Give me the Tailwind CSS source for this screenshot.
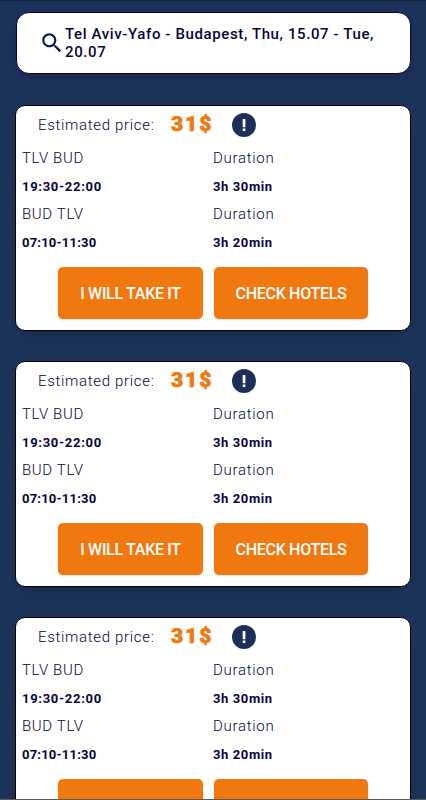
<!DOCTYPE html>
<html lang="en">
<head>
    <meta charset="UTF-8">
    <meta name="viewport" content="width=device-width, initial-scale=1.0">
    <title>Flights</title>
    <script src="https://cdn.jsdelivr.net/npm/@tailwindcss/browser@4"></script>
</head>
<body class="h-screen overflow-hidden border-b border-[#5b5b5b] bg-[#1c345a] font-[Roboto,sans-serif] text-[#04063d]">
    <!-- Search bar -->
    <header class="h-[87px] border-t border-[#14263f] bg-[#1d325a] pt-[11px] pl-4">
        <button class="flex h-[62px] w-[395px] items-center rounded-[13px] border border-[#04063d] bg-white pl-[22px] text-left shadow-md">
            <svg class="mt-[-1px] h-[26px] w-[26px] shrink-0 text-[#0f1b50]" viewBox="0 0 24 24" fill="currentColor">
                <path d="M15.5 14h-.79l-.28-.27C15.41 12.59 16 11.11 16 9.5 16 5.91 13.09 3 9.5 3S3 5.91 3 9.5 5.91 16 9.5 16c1.61 0 3.09-.59 4.23-1.57l.27.28v.79l5 4.99L20.49 19l-4.99-5zm-6 0C7.01 14 5 11.99 5 9.5S7.01 5 9.5 5 14 7.01 14 9.5 11.99 14 9.5 14z"/>
            </svg>
            <span class="-mt-px text-[15px] leading-[18px] font-medium tracking-[0.62px] whitespace-nowrap">Tel Aviv-Yafo - Budapest, Thu, 15.07 - Tue,<br>20.07</span>
        </button>
    </header>

    <!-- Flight cards -->
    <main id="flights" class="flex flex-col gap-[31px] pt-[18px] pl-[15px]"></main>

    <template id="flightCard">
        <article class="h-[226px] w-[396px] shrink-0 -mb-px rounded-[10px] border border-black bg-white shadow-lg">
            <div class="flex h-[38px] items-center pl-[22px]">
                <span class="w-[133px] text-[15px] font-light tracking-[0.68px] whitespace-nowrap">Estimated price:</span>
                <span class="w-[61px] text-[21px] font-black tracking-[1.9px] text-[#f0780f] [-webkit-text-stroke:0.7px_#f0780f]">31$</span>
                <svg class="h-6 w-6" viewBox="0 0 24 24">
                    <circle cx="12" cy="12" r="12" fill="#1b2f5a"/>
                    <path d="M10.7 6h2.7v8.2h-2.7zM10.7 15.5h2.7v2.5h-2.7z" fill="white"/>
                </svg>
            </div>
            <div class="grid grid-cols-[191px_1fr] auto-rows-[28px] items-center pl-[6px] text-[15px] whitespace-nowrap">
                <span class="font-light tracking-[0.65px]">TLV BUD</span>
                <span class="font-light tracking-[0.7px]">Duration</span>
                <span class="pt-px text-[13px] font-bold tracking-[0.7px]">19:30-22:00</span>
                <span class="pt-px text-[13px] font-bold tracking-[0.6px]">3h 30min</span>
                <span class="font-light tracking-[0.65px]">BUD TLV</span>
                <span class="font-light tracking-[0.7px]">Duration</span>
                <span class="pt-px text-[13px] font-bold tracking-[0.2px]">07:10-11:30</span>
                <span class="pt-px text-[13px] font-bold tracking-[0.6px]">3h 20min</span>
            </div>
            <div class="mt-[11px] flex gap-[11px] pl-[42px] text-[16px] font-medium tracking-[-0.3px] text-white">
                <button class="h-[52px] w-[145px] rounded-[5px] bg-[#f0780f] pt-[2px] shadow-sm">I WILL TAKE IT</button>
                <button class="h-[52px] w-[154px] rounded-[5px] bg-[#f0780f] pt-[2px] shadow-sm">CHECK HOTELS</button>
            </div>
        </article>
    </template>

    <script>
        const flights = document.getElementById('flights');
        const flightCard = document.getElementById('flightCard');
        for (let i = 0; i < 3; i++) {
            flights.appendChild(flightCard.content.cloneNode(true));
        }
    </script>
</body>
</html>
